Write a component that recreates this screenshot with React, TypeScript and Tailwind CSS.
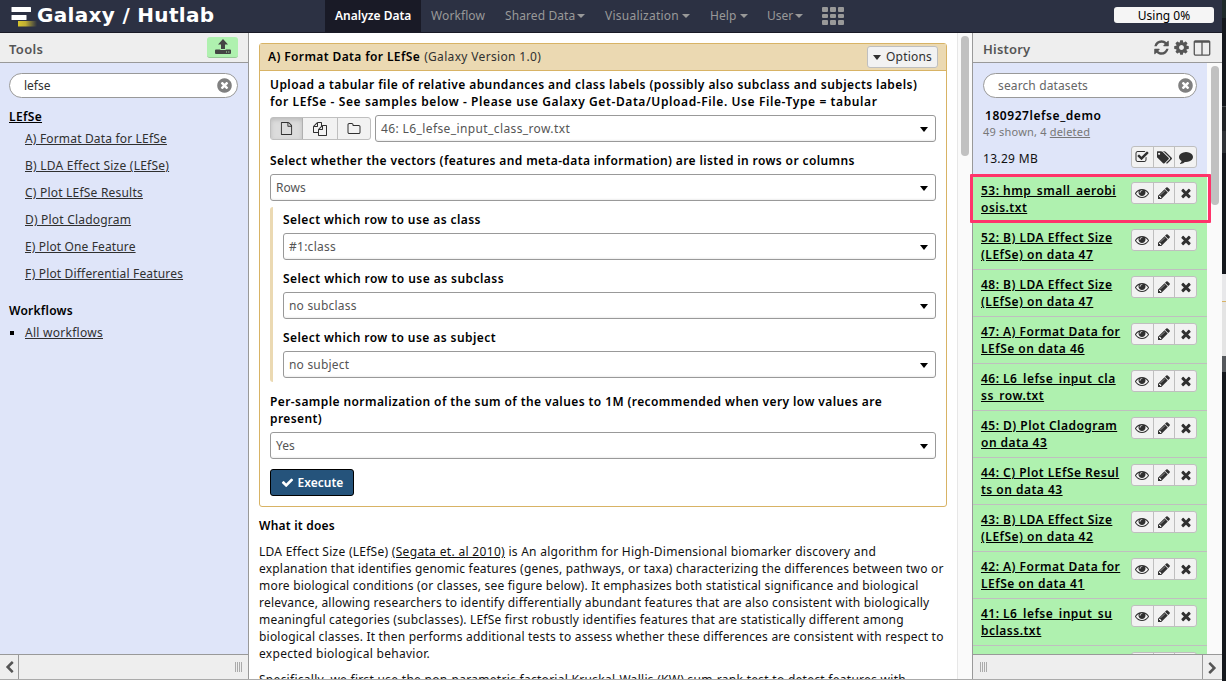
import React from 'react';

const ICONS = {
  eye: 'M1664 960q-152-236-381-353 61 104 61 225 0 185-131.5 316.5t-316.5 131.5-316.5-131.5-131.5-316.5q0-121 61-225-229 117-381 353 133 205 333.5 326.5t434.5 121.5 434.5-121.5 333.5-326.5zm-720-384q0-20-14-34t-34-14q-125 0-214.5 89.5t-89.5 214.5q0 20 14 34t34 14 34-14 14-34q0-86 61-147t147-61q20 0 34-14t14-34zm848 384q0 34-20 69-140 230-376.5 368.5t-499.5 138.5-499.5-139-376.5-368q-20-35-20-69t20-69q140-229 376.5-368t499.5-139 499.5 139 376.5 368q20 35 20 69z',
  pencil: 'M491 1536l91-91-235-235-91 91v107h128v128h107zm523-928q0-22-22-22-10 0-17 7l-542 542q-7 7-7 17 0 22 22 22 10 0 17-7l542-542q7-7 7-17zm-54-192l416 416-832 832h-416v-416zm683 96q0 53-37 90l-166 166-416-416 166-165q36-38 90-38 53 0 91 38l235 234q37 39 37 91z',
  times: 'M1490 1322q0 40-28 68l-136 136q-28 28-68 28t-68-28l-294-294-294 294q-28 28-68 28t-68-28l-136-136q-28-28-28-68t28-68l294-294-294-294q-28-28-28-68t28-68l136-136q28-28 68-28t68 28l294 294 294-294q28-28 68-28t68 28l136 136q28 28 28 68t-28 68l-294 294 294 294q28 28 28 68z',
  timesCircle: 'M1277 1122q0-26-19-45l-181-181 181-181q19-19 19-45 0-27-19-46l-90-90q-19-19-46-19-26 0-45 19l-181 181-181-181q-19-19-45-19-27 0-46 19l-90 90q-19 19-19 46 0 26 19 45l181 181-181 181q-19 19-19 45 0 27 19 46l90 90q19 19 46 19 26 0 45-19l181-181 181 181q19 19 45 19 27 0 46-19l90-90q19-19 19-46zm387-226q0 209-103 385.5t-279.5 279.5-385.5 103-385.5-103-279.5-279.5-103-385.5 103-385.5 279.5-279.5 385.5-103 385.5 103 279.5 279.5 103 385.5z',
  check: 'M1671 566q0 40-28 68l-724 724-136 136q-28 28-68 28t-68-28l-136-136-362-362q-28-28-28-68t28-68l136-136q28-28 68-28t68 28l294 295 656-657q28-28 68-28t68 28l136 136q28 28 28 68z',
  cog: 'M1152 896q0-106-75-181t-181-75-181 75-75 181 75 181 181 75 181-75 75-181zm512-109v222q0 12-8 23t-20 13l-185 28q-19 54-39 91 35 50 107 138 10 12 10 25t-9 23q-27 37-99 108t-94 71q-12 0-26-9l-138-108q-44 23-91 38-16 136-29 186-7 28-36 28h-222q-14 0-24.5-8.5t-11.5-21.5l-28-184q-49-16-90-37l-141 107q-10 9-25 9-14 0-25-11-126-114-165-168-7-10-7-23 0-12 8-23 15-21 51-66.5t54-70.5q-27-50-41-99l-183-27q-13-2-21-12.5t-8-23.5v-222q0-12 8-23t19-13l186-28q14-46 39-92-40-57-107-138-10-12-10-24 0-10 9-23 26-36 98.5-107.5t94.5-71.5q13 0 26 10l138 107q44-23 91-38 16-136 29-186 7-28 36-28h222q14 0 24.5 8.5t11.5 21.5l28 184q49 16 90 37l142-107q9-9 24-9 13 0 25 10 129 119 165 170 7 8 7 22 0 12-8 23-15 21-51 66.5t-54 70.5q26 50 41 98l183 28q13 2 21 12.5t8 23.5z',
  refresh: 'M1639 1056q0 5-1 7-64 268-268 434.5t-478 166.5q-146 0-282.5-55t-243.5-157l-129 129q-19 19-45 19t-45-19-19-45v-448q0-26 19-45t45-19h448q26 0 45 19t19 45-19 45l-137 137q71 66 161 102t187 36q134 0 250-65t186-179q11-17 53-117 8-23 30-23h192q13 0 22.5 9.5t9.5 22.5zm25-800v448q0 26-19 45t-45 19h-448q-26 0-45-19t-19-45 19-45l138-138q-148-137-349-137-134 0-250 65t-186 179q-11 17-53 117-8 23-30 23h-199q-13 0-22.5-9.5t-9.5-22.5v-7q65-268 270-434.5t480-166.5q146 0 284 55.5t245 156.5l130-129q19-19 45-19t45 19 19 45z',
  comment: 'M1792 896q0 174-120 321.5t-326 233-450 85.5q-70 0-145-8-198 175-460 242-49 14-114 22-17 2-30.5-9t-17.5-29v-1q-3-4-.5-12t2-10 4.5-9.5l6-9 7-8.5 8-9q7-8 31-34.5t34.5-38 31-39.5 32.5-51 27-59 26-76q-157-89-247.5-220t-90.5-281q0-130 71-248.5t191-204.5 286-136.5 348-50.5q244 0 450 85.5t326 233 120 321.5z',
  tags: 'M384 448q0-53-37.5-90.5t-90.5-37.5-90.5 37.5-37.5 90.5 37.5 90.5 90.5 37.5 90.5-37.5 37.5-90.5zm1067 576q0 53-37 90l-491 492q-39 37-91 37-53 0-90-37l-715-716q-38-37-64.5-101t-26.5-117v-416q0-52 38-90t90-38h416q53 0 117 26.5t102 64.5l715 714q37 39 37 91zm384 0q0 53-37 90l-491 492q-39 37-91 37-36 0-59-14t-53-45l470-470q37-37 37-90 0-52-37-91l-715-714q-38-38-102-64.5t-117-26.5h224q53 0 117 26.5t102 64.5l715 714q37 39 37 91z',
  checkSquare: 'M1472 930v318q0 119-84.5 203.5t-203.5 84.5h-832q-119 0-203.5-84.5t-84.5-203.5v-832q0-119 84.5-203.5t203.5-84.5h832q63 0 117 25 15 7 18 23 3 17-9 29l-49 49q-10 10-23 10-3 0-9-2-23-6-45-6h-832q-66 0-113 47t-47 113v832q0 66 47 113t113 47h832q66 0 113-47t47-113v-254q0-13 9-22l64-64q10-10 23-10 6 0 12 3 20 8 20 29zm231-489l-814 814q-24 24-57 24t-57-24l-430-430q-24-24-24-57t24-57l110-110q24-24 57-24t57 24l263 263 647-647q24-24 57-24t57 24l110 110q24 24 24 57t-24 57z',
  columns: 'M224 1536h608v-1152h-640v1120q0 13 9.500 22.500t22.500 9.500zm1376-32v-1120h-640v1152h608q13 0 22.500-9.500t9.500-22.500zm128-1216v1216q0 66-47 113t-113 47h-1344q-66 0-113-47t-47-113v-1216q0-66 47-113t113-47h1344q66 0 113 47t47 113z',
  file: 'M1596 380q28 28 48 76t20 88v1152q0 40-28 68t-68 28h-1344q-40 0-68-28t-28-68v-1600q0-40 28-68t68-28h896q40 0 88 20t76 48zm-444-244v376h376q-10-29-22-41l-313-313q-12-12-41-22zm384 1528v-1024h-416q-40 0-68-28t-28-68v-416h-768v1536h1280z',
  files: 'M1696 384q40 0 68 28t28 68v1216q0 40-28 68t-68 28h-960q-40 0-68-28t-28-68v-288h-544q-40 0-68-28t-28-68v-672q0-40 20-88t48-76l408-408q28-28 76-48t88-20h416q40 0 68 28t28 68v328q68-40 128-40h416zm-544 213l-299 299h299v-299zm-640-384l-299 299h299v-299zm196 647l316-316v-416h-384v416q0 40-28 68t-68 28h-416v640h512v-256q0-40 20-88t48-76zm956 804v-1152h-384v416q0 40-28 68t-68 28h-416v640h896z',
  folder: 'M1600 1312v-704q0-40-28-68t-68-28h-704q-40 0-68-28t-28-68v-64q0-40-28-68t-68-28h-320q-40 0-68 28t-28 68v960q0 40 28 68t68 28h1216q40 0 68-28t28-68zm128-704v704q0 92-66 158t-158 66h-1216q-92 0-158-66t-66-158v-960q0-92 66-158t158-66h320q92 0 158 66t66 158v32h672q92 0 158 66t66 158z',
  chevron: 'M1427 301l-531 531 531 531q19 19 19 45t-19 45l-166 166q-19 19-45 19t-45-19l-742-742q-19-19-19-45t19-45l742-742q19-19 45-19t45 19l166 166q19 19 19 45t-19 45z',
};

type IconName = keyof typeof ICONS;

function Icon({ name, className = 'size-[14px]' }: { name: IconName; className?: string }) {
  return (
    <svg viewBox={name === 'tags' ? '0 0 1840 1792' : '0 0 1792 1792'} fill="currentColor" className={`shrink-0 ${className}`}>
      <path d={ICONS[name]} />
    </svg>
  );
}

function Caret({ className = '' }: { className?: string }) {
  return <span className={`inline-block h-0 w-0 border-x-4 border-t-4 border-x-transparent border-t-current ${className}`} />;
}

function Masthead() {
  return (
    <header className="flex h-[33px] shrink-0 border-b border-[#191a26] bg-[#2c3143] text-[#999999]">
      <div className="flex w-[325px] shrink-0 pl-[11px]">
        <svg viewBox="0 0 26 20" className="mt-[7px] h-5 w-[26px] shrink-0">
          <defs>
            <linearGradient id="bar" x1="0" x2="1">
              <stop offset="0" stopColor="#d8c62e" />
              <stop offset="0.4" stopColor="#bfae33" />
              <stop offset="1" stopColor="#2c3143" />
            </linearGradient>
          </defs>
          <rect x="0.5" y="0" width="19.5" height="5" rx="0.5" fill="#fff" />
          <rect x="0.5" y="8" width="15" height="5" rx="0.5" fill="#fff" />
          <rect x="7" y="14" width="19" height="5.5" fill="url(#bar)" />
        </svg>
        <span className="font-['DejaVu_Sans',sans-serif] text-[20px] leading-[31px] font-bold tracking-[0.32px] whitespace-nowrap text-white">
          Galaxy / Hutlab
        </span>
      </div>
      <nav className="flex leading-[32px]">
        <span className="w-[96px] bg-[#191a26] pl-[10px] font-semibold text-white">Analyze Data</span>
        <span className="w-[74px] pl-[10px] tracking-[0.1px]">Workflow</span>
        <span className="w-[101px] pl-[10px] tracking-[0.1px]">Shared Data<Caret className="mb-[2px] ml-[2px]" /></span>
        <span className="w-[104px] pl-[9px] tracking-[0.24px]">Visualization<Caret className="mb-[2px] ml-[3px]" /></span>
        <span className="w-[57px] pl-[10px] tracking-[0.1px]">Help<Caret className="mb-[2px] ml-[3px]" /></span>
        <span className="w-[66px] pl-[10px]">User<Caret className="mb-[2px] ml-[2px]" /></span>
        <span className="mt-[7px] -ml-px grid h-[17px] grid-cols-3 gap-x-[2px] gap-y-[2px]">
          {Array.from({ length: 9 }, (_, i) => (
            <span key={i} className="h-[4.7px] w-[6px] rounded-[1px] bg-[#999999]" />
          ))}
        </span>
      </nav>
      <span className="mt-[7px] mr-[8px] ml-auto h-4 w-[100px] rounded-[3px] bg-[#f5f5f5] text-center leading-[17px] text-black">Using 0%</span>
    </header>
  );
}

function SearchBox({ text, className }: { text: string; className: string }) {
  return (
    <div className={`flex h-[25px] items-center justify-between rounded-full border border-[#999999] bg-white pl-[14px] ${className}`}>
      <span>{text}</span>
      <Icon name="timesCircle" className="mb-px size-[17px] text-[#808080]" />
    </div>
  );
}

function ToolLink({ text, className }: { text: string; className: string }) {
  return (
    <li className="h-[27px] pl-[25px]">
      <a className={`underline ${className}`}>{text}</a>
    </li>
  );
}

function Grip() {
  return <span className="h-[10px] w-[8px] bg-[repeating-linear-gradient(90deg,#aaa_0_1px,transparent_1px_2px)]" />;
}

function ToolPanel() {
  return (
    <aside className="flex w-[249px] shrink-0 flex-col border-r border-[#999999] bg-[#dfe5f9] text-[#303030]">
      <div className="flex h-[30px] shrink-0 items-center justify-between border-b border-[#999999] bg-[#eeeeee] pt-[3px] pr-[10px] pl-[9px]">
        <span className="text-[13px] font-semibold tracking-[0.35px] text-[#555555]">Tools</span>
        <span className="mb-[4px] flex h-[21px] w-[31px] items-center justify-center rounded-[3px] border-b border-[#96c896] bg-[#aff1af] text-[#444444]">
          <svg viewBox="0 0 16 15" fill="currentColor" className="h-[15px] w-4">
            <path d="M8 0l5 5.500H10V10H6V5.500H3z" />
            <path fillRule="evenodd" d="M1 10.500h4.300v.5h5.400v-.5H15a1 1 0 0 1 1 1V14a1 1 0 0 1-1 1H1a1 1 0 0 1-1-1v-2.500a1 1 0 0 1 1-1zM11 12.500v1h1v-1zm2.300 0v1h1v-1z" />
          </svg>
        </span>
      </div>
      <div className="flex-1 pt-[10px]">
        <SearchBox text="lefse" className="mx-[9px] w-[229px] pr-[4px]" />
        <div className="mt-[10px] pl-[9px] font-semibold tracking-[0.34px] text-black underline">LEfSe</div>
        <ul className="mt-[5px]">
          <ToolLink text="A) Format Data for LEfSe" className="tracking-[0.17px]" />
          <ToolLink text="B) LDA Effect Size (LEfSe)" className="tracking-[0.24px]" />
          <ToolLink text="C) Plot LEfSe Results" className="tracking-[0.21px]" />
          <ToolLink text="D) Plot Cladogram" className="tracking-[0.2px]" />
          <ToolLink text="E) Plot One Feature" className="tracking-[0.13px]" />
          <ToolLink text="F) Plot Differential Features" className="tracking-[0.17px]" />
        </ul>
        <div className="mt-[10px] pl-[9px] font-semibold tracking-[0.24px] text-black">Workflows</div>
        <div className="mt-[5px] flex items-center pl-[10px]">
          <span className="mr-[11px] size-1 bg-black" />
          <a className="tracking-[0.27px] underline">All workflows</a>
        </div>
      </div>
      <div className="flex h-[25px] shrink-0 items-center justify-between border-t border-[#999999] bg-[#eeeeee] pr-[5px]">
        <span className="flex h-full w-[19px] items-center justify-center border-r border-[#999999] text-[#555555]">
          <Icon name="chevron" className="size-[13px]" />
        </span>
        <Grip />
      </div>
    </aside>
  );
}

function Select({ text, className = '' }: { text: string; className?: string }) {
  return (
    <div className={`flex h-[27px] items-center justify-between rounded-[3px] border border-[#999999] bg-white pr-[7px] pl-[5px] text-[#555555] shadow-[inset_0_-2px_2px_-1px_#eeeeee] ${className}`}>
      <span>{text}</span>
      <Caret className="mt-px border-t-[5px] text-black" />
    </div>
  );
}

function Label({ text, className = '' }: { text: string; className?: string }) {
  return <div className={`font-semibold whitespace-nowrap text-black ${className}`}>{text}</div>;
}

function ToolForm() {
  return (
    <section className="h-[464px] w-[688px] rounded-[3px] border border-[#d8b365] bg-white">
      <div className="flex h-[27px] items-center justify-between border-b border-[#d8b365] bg-[#ebd9b2] pr-[8px] pl-[8px]">
        <span className="mb-px whitespace-nowrap text-[#303030]">
          <b className="font-semibold tracking-[0.38px] text-black">A) Format Data for LEfSe</b>
          <span className="ml-1 tracking-[0.33px]">(Galaxy Version 1.0)</span>
        </span>
        <span className="flex h-[22px] w-[71px] items-center justify-center rounded-[3px] border border-[#bfbfbf] bg-[#f2f2f2] pb-px tracking-[0.2px] text-[#303030]">
          <Caret className="mt-px mr-[5px] border-t-[5px]" />
          Options
        </span>
      </div>
      <div className="pt-[5px] pr-[10px] pl-[10px]">
        <Label text="Upload a tabular file of relative abundances and class labels (possibly also subclass and subjects labels)" className="tracking-[0.43px]" />
        <Label text="for LEfSe - See samples below - Please use Galaxy Get-Data/Upload-File. Use File-Type = tabular" className="tracking-[0.6px]" />
        <div className="mt-[5px] flex items-center">
          <div className="mr-[4px] flex h-[23px] w-[101px] rounded-[3px] border border-[#bfbfbf] bg-[#f2f2f2] text-[#303030]">
            <span className="flex w-[32px] items-center justify-center border-r border-[#b0b0b0] bg-[#dcdcdc] shadow-[inset_0_2px_4px_#bbbbbb]"><Icon name="file" className="size-[13px]" /></span>
            <span className="flex w-[35px] items-center justify-center border-r border-[#bfbfbf]"><Icon name="files" /></span>
            <span className="flex flex-1 items-center justify-center"><Icon name="folder" className="size-[14px]" /></span>
          </div>
          <Select text="46: L6_lefse_input_class_row.txt" className="flex-1 tracking-[0.39px]" />
        </div>
        <Label text="Select whether the vectors (features and meta-data information) are listed in rows or columns" className="mt-[10px] mb-[5px] tracking-[0.38px]" />
        <Select text="Rows" />
        <div className="mt-[6px] h-[175px] rounded-[3px] border-l-[3px] border-[#ebd9b2] pt-[4px] pl-[10px]">
          <Label text="Select which row to use as class" className="mb-[5px] tracking-[0.42px]" />
          <Select text="#1:class" className="tracking-[0.26px]" />
          <Label text="Select which row to use as subclass" className="mt-[10px] mb-[5px] tracking-[0.44px]" />
          <Select text="no subclass" className="tracking-[0.2px]" />
          <Label text="Select which row to use as subject" className="mt-[10px] mb-[5px] tracking-[0.42px]" />
          <Select text="no subject" className="tracking-[0.2px]" />
        </div>
        <Label text="Per-sample normalization of the sum of the values to 1M (recommended when very low values are" className="mt-[11px] tracking-[0.41px]" />
        <Label text="present)" className="mb-[5px] tracking-[0.41px]" />
        <Select text="Yes" />
        <button className="mt-[10px] flex h-[27px] w-[84px] items-center justify-center gap-[4px] rounded-[3px] border border-black bg-[#25537b] font-semibold text-white">
          <Icon name="check" className="size-[13px]" />
          Execute
        </button>
      </div>
    </section>
  );
}

function HelpText() {
  return (
    <div className="whitespace-nowrap text-[#111111]">
      <h2 className="mt-[10px] mb-[9px] font-semibold tracking-[0.22px] text-black">What it does</h2>
      <div className="tracking-[0.26px]">
        LDA Effect Size (LEfSe) <a className="tracking-[0.33px] underline">(Segata et. al 2010)</a> is An algorithm for High-Dimensional biomarker discovery and
      </div>
      <div className="tracking-[0.2px]">explanation that identifies genomic features (genes, pathways, or taxa) characterizing the differences between two or</div>
      <div className="tracking-[0.21px]">more biological conditions (or classes, see figure below). It emphasizes both statistical significance and biological</div>
      <div className="tracking-[0.2px]">relevance, allowing researchers to identify differentially abundant features that are also consistent with biologically</div>
      <div className="tracking-[0.21px]">meaningful categories (subclasses). LEfSe first robustly identifies features that are statistically different among</div>
      <div className="tracking-[0.21px]">biological classes. It then performs additional tests to assess whether these differences are consistent with respect to</div>
      <div className="tracking-[0.29px]">expected biological behavior.</div>
      <div className="mt-[9px] tracking-[0.28px]">Specifically, we first use the non-parametric factorial Kruskal-Wallis (KW) sum-rank test to detect features with</div>
    </div>
  );
}

function IconGroup({ icons }: { icons: IconName[] }) {
  return (
    <span className="flex h-[22px] w-[66px] shrink-0 divide-x divide-[#bfbfbf] rounded-[3px] border border-[#bfbfbf] bg-[#f2f2f2] text-[#303030]">
      {icons.map((name) => (
        <span key={name} className="flex flex-1 items-center justify-center">
          <Icon name={name} className={name === 'tags' ? 'size-[15px]' : 'size-[14px]'} />
        </span>
      ))}
    </span>
  );
}

const DATASETS = [
  ['53: hmp_small_aerobi', 'osis.txt'],
  ['52: B) LDA Effect Size', '(LEfSe) on data 47'],
  ['48: B) LDA Effect Size', '(LEfSe) on data 47'],
  ['47: A) Format Data for', 'LEfSe on data 46'],
  ['46: L6_lefse_input_cla', 'ss_row.txt'],
  ['45: D) Plot Cladogram', 'on data 43'],
  ['44: C) Plot LEfSe Resul', 'ts on data 43'],
  ['43: B) LDA Effect Size', '(LEfSe) on data 42'],
  ['42: A) Format Data for', 'LEfSe on data 41'],
  ['41: L6_lefse_input_su', 'bclass.txt'],
];

function HistoryPanel() {
  return (
    <aside className="flex w-[250px] shrink-0 flex-col border-l border-[#999999]">
      <div className="flex h-[30px] shrink-0 items-center border-b border-[#999999] bg-[#eeeeee] pl-[10px] text-[#555555]">
        <span className="mt-[3px] mr-auto text-[13px] font-semibold tracking-[0.2px]">History</span>
        <Icon name="refresh" className="size-[17px]" />
        <Icon name="cog" className="ml-[3px] size-[17px]" />
        <Icon name="columns" className="mr-[11px] ml-[3px] size-[18px]" />
      </div>
      <div className="flex min-h-0 flex-1 overflow-hidden">
        <div className="w-[234px] bg-[#aff1af]">
          <div className="h-[113px] bg-[#dfe5f9] pt-[10px]">
            <SearchBox text="search datasets" className="ml-[10px] w-[214px] pr-[2px] tracking-[0.13px] text-[#666666]" />
            <div className="mt-[9px] pl-[12px] font-semibold tracking-[0.56px] text-black">180927lefse_demo</div>
            <div className="-mt-px mb-px pl-[10px] text-[11px] tracking-[0.2px] text-[#777777]">49 shown, 4 <a className="underline">deleted</a></div>
            <div className="mt-[6px] flex justify-between pr-[10px] pl-[10px]">
              <span className="mt-[4px] tracking-[0.32px] text-[#111111]">13.29 MB</span>
              <IconGroup icons={['checkSquare', 'tags', 'comment']} />
            </div>
          </div>
          {DATASETS.map(([first, second]) => (
            <div key={first} className="flex h-[47px] justify-between border-b border-[#bfbfbf] pt-[6px] pr-[10px] pl-[8px]">
              <span className="font-semibold tracking-[0.48px] whitespace-nowrap text-black underline">
                {first}
                <br />
                {second}
              </span>
              <IconGroup icons={['eye', 'pencil', 'times']} />
            </div>
          ))}
          <div className="flex h-[47px] justify-end pt-[6px] pr-[10px]">
            <IconGroup icons={['eye', 'pencil', 'times']} />
          </div>
        </div>
        <div className="flex-1 bg-[#fafafa] pt-[3px] pl-[4px]">
          <div className="h-[139px] w-2 rounded-full bg-[#c1c1c1]" />
        </div>
      </div>
      <div className="flex h-[25px] shrink-0 items-center justify-between border-t border-[#999999] bg-[#eeeeee] pl-[7px]">
        <Grip />
        <span className="flex h-full w-[20px] items-center justify-center border-l border-[#999999] text-[#555555]">
          <Icon name="chevron" className="size-[13px] rotate-180" />
        </span>
      </div>
      <div className="absolute top-[174px] left-[970px] h-[49px] w-[241px] rounded-[1px] border-[3px] border-[#ff336b]" />
    </aside>
  );
}

export default function App() {
  return (
    <div className="relative flex h-[681px] w-[1226px] overflow-hidden bg-white font-['Noto_Sans',sans-serif] text-[12px] leading-[17px]">
      <div className="flex w-[1222px] shrink-0 flex-col">
        <Masthead />
        <div className="flex h-[646px] shrink-0 overflow-hidden">
          <ToolPanel />
          <main className="w-[708px] shrink-0 overflow-hidden pt-[10px] pl-[10px]">
            <ToolForm />
            <HelpText />
          </main>
          <div className="w-[15px] shrink-0 border-l border-[#e7e7e7] bg-[#fafafa] pt-[3px] pl-[3px]">
            <div className="h-[120px] w-2 rounded-full bg-[#c1c1c1]" />
          </div>
          <HistoryPanel />
        </div>
        <div className="h-px bg-[#aaaaaa]" />
      </div>
      <div className="flex flex-1 flex-col bg-[#15181d]">
        <div className="h-[18px] bg-[#1f2a2a]" />
        <div className="h-[88px]" />
        <div className="h-px bg-[#4a4d52]" />
        <div className="h-[24px] bg-[#202326]" />
        <div className="h-[22px] bg-[#2f3236]" />
        <div className="h-[121px]" />
        <div className="h-[27px] bg-[#e8e8ea]" />
        <div className="h-px bg-[#d8b365]" />
        <div className="h-[54px] bg-[#e4e4e4]" />
        <div className="h-[16px] bg-[#55585c]" />
      </div>
    </div>
  );
}
